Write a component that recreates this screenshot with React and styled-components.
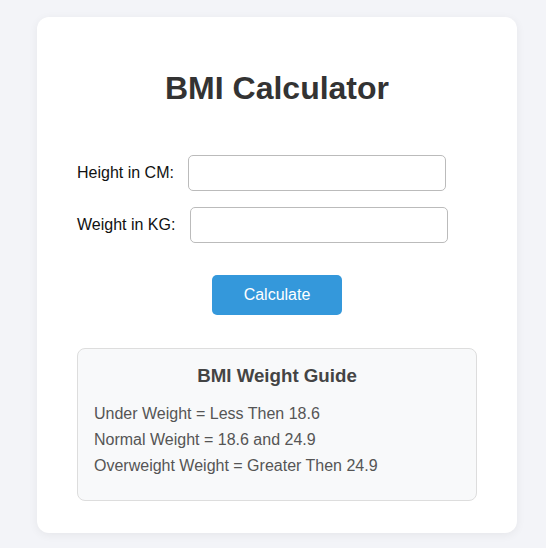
import React, { useState } from 'react'
import styled, { createGlobalStyle } from 'styled-components'

const GlobalStyle = createGlobalStyle`
    html, body {
        margin: 0;
        padding: 0;
        background: #f3f4f8;
        font-family: "Liberation Sans", Arial, sans-serif;
    }
`;

const Page = styled.div`
    padding: 17px 29px 16px 37px;
`;

const Card = styled.div`
    width: 480px;
    box-sizing: border-box;
    background: #fff;
    border-radius: 12px;
    box-shadow: 0 2px 10px rgba(0, 0, 0, 0.06);
    padding: 32px 40px;
`;

const Title = styled.h1`
    margin: 21px 0 0;
    text-align: center;
    font-size: 32px;
    line-height: 37px;
    font-weight: 700;
    color: #333;
`;

const Form = styled.form`
    display: flex;
    flex-direction: column;
    gap: 16px;
    margin-top: 48px;
`;

const Row = styled.div`
    display: flex;
    align-items: center;
    gap: ${p => p.gap || 14}px;
`;

const Label = styled.label`
    font-size: 16px;
    color: #111;
`;

const Input = styled.input`
    width: 258px;
    height: 36px;
    box-sizing: border-box;
    border: 1px solid #bbb;
    border-radius: 5px;
    padding: 0 10px;
    font-size: 16px;
    font-family: inherit;
`;

const Button = styled.button`
    align-self: center;
    width: 130px;
    height: 40px;
    margin-top: 16px;
    border: none;
    border-radius: 5px;
    background: #3498db;
    color: #fff;
    font-size: 16px;
    font-family: inherit;
    cursor: pointer;
`;

const Guide = styled.div`
    margin-top: 33px;
    background: #f8f9fa;
    border: 1px solid #ddd;
    border-radius: 8px;
    padding: 16px 16px 21px;

    h3 {
        margin: 0 0 15px;
        text-align: center;
        font-size: 18.72px;
        line-height: 21px;
        color: #444;
    }

    p {
        margin: 0;
        font-size: 16px;
        line-height: 26px;
        color: #555;
    }
`;

function App() {
    const [height, setHeight] = useState('')
    const [weight, setWeight] = useState('')

    return (
        <Page>
            <GlobalStyle />
            <Card>
                <Title>BMI Calculator</Title>
                <Form onSubmit={e => e.preventDefault()}>
                    <Row>
                        <Label>Height in CM:</Label>
                        <Input value={height} onChange={e => setHeight(e.target.value)} />
                    </Row>
                    <Row gap={15}>
                        <Label>Weight in KG:</Label>
                        <Input value={weight} onChange={e => setWeight(e.target.value)} />
                    </Row>
                    <Button type="submit">Calculate</Button>
                </Form>
                <Guide>
                    <h3>BMI Weight Guide</h3>
                    <p>Under Weight = Less Then 18.6</p>
                    <p>Normal Weight = 18.6 and 24.9</p>
                    <p>Overweight Weight = Greater Then 24.9</p>
                </Guide>
            </Card>
        </Page>
    )
}

export default App
